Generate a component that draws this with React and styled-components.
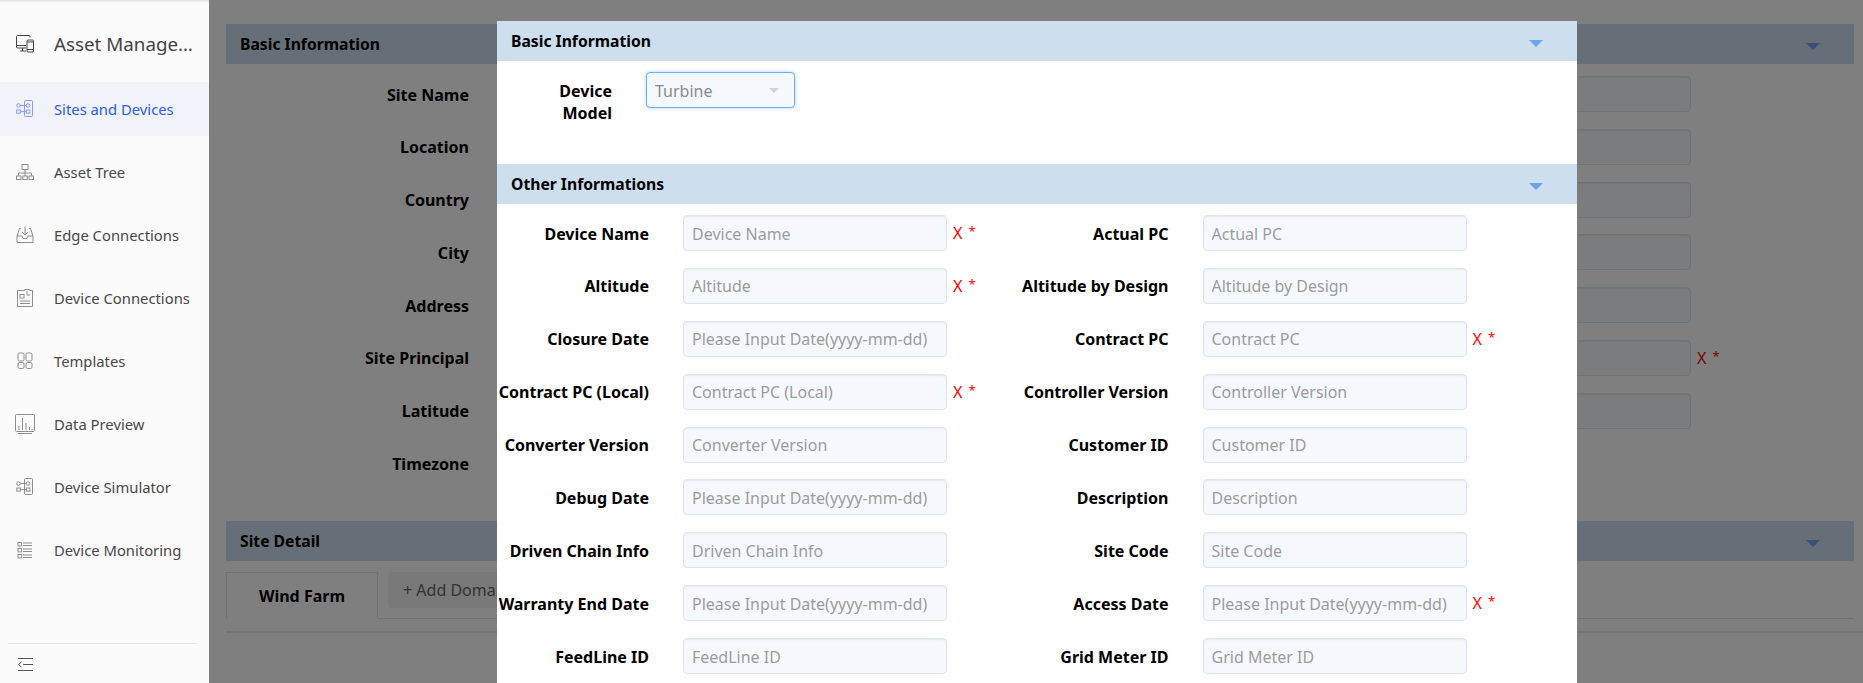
import React from "react";
import styled, { createGlobalStyle } from "styled-components";

const Global = createGlobalStyle`
  html, body { margin: 0; padding: 0; height: 100%; overflow: hidden; background: #fff; }
  body { font-family: "Noto Sans", "Open Sans", sans-serif; font-size: 14px; color: #000; }
  #root { height: 100%; }
  * { box-sizing: border-box; }
`;

const Page = styled.div`
  display: flex;
  height: 683px;
  width: 1863px;
  overflow: hidden;
  position: relative;
`;

const Sidebar = styled.aside`
  flex: 0 0 209px;
  width: 209px;
  min-width: 0;
  display: flex;
  flex-direction: column;
  background: #fbfbfb;
  box-shadow: inset 0 3px 3px -2px rgba(0, 0, 0, 0.12);
`;

const Brand = styled.div`
  height: 82px;
  flex: none;
  display: flex;
  align-items: center;
  gap: 19px;
  padding: 6px 13px 0 15px;
  color: #444;
  font-size: 18.8px;
`;

const BrandText = styled.span`
  flex: 1;
  min-width: 0;
  width: 0;
  white-space: nowrap;
  overflow: hidden;
  text-overflow: ellipsis;
`;

const NavList = styled.nav`
  flex: 1;
  display: flex;
  flex-direction: column;
  gap: 9px;
`;

const NavItem = styled.a`
  height: 54px;
  display: flex;
  align-items: center;
  gap: 19px;
  padding-left: 15px;
  font-size: 14.8px;
  color: ${(p) => (p.$active ? "#2a5cf5" : "#484848")};
  background: ${(p) => (p.$active ? "#f2f3fa" : "transparent")};
`;

const SideFoot = styled.div`
  height: 40px;
  margin: 0 12px 0 8px;
  border-top: 1px solid #e6e6e6;
  display: flex;
  align-items: center;
  padding-left: 8px;
  flex: none;
`;

const Main = styled.main`
  flex: 1;
  min-width: 0;
  position: relative;
  overflow: hidden;
  padding: 24px 9px 0 17px;
  background: #fff;
`;

const Overlay = styled.div`
  position: absolute;
  inset: 0;
  background: rgba(0, 0, 0, 0.5);
`;

const SectionBar = styled.div`
  height: 40px;
  display: flex;
  align-items: center;
  justify-content: space-between;
  padding: 0 34px 0 14px;
  background: #cddfef;
  font-size: 15.7px;
  font-weight: 700;
  color: #000;
`;

const Caret = styled.span`
  width: 0;
  height: 0;
  margin-top: 5px;
  border-left: 7px solid transparent;
  border-right: 7px solid transparent;
  border-top: 7px solid #6ea3e8;
`;

const BackForm = styled.div`
  display: flex;
  flex-direction: column;
  gap: 16.8px;
  padding-top: 12px;
  height: 457px;
`;

const BackRow = styled.div`
  display: flex;
  align-items: center;
  height: 36px;
`;

const BackLabel = styled.label`
  flex: 0 0 243px;
  padding-top: 1px;
  text-align: right;
  font-size: 16px;
  font-weight: 700;
  margin-right: 34px;
`;

const Field = styled.input`
  height: 36px;
  width: ${(p) => p.$w || 264}px;
  flex: none;
  padding: 1px 8px 0;
  font: inherit;
  font-size: 16px;
  border: 1px solid #dce6f2;
  border-radius: 4px;
  background: #f5f9fd;
  box-shadow: inset 0 1px 1px rgba(120, 140, 170, 0.12);
  outline: none;
  &::placeholder { color: #9c9c9c; opacity: 1; }
`;

const Required = styled.span`
  display: inline-flex;
  align-items: flex-start;
  gap: 6px;
  margin-left: 6px;
  color: #f00;
  font-size: 16px;
  white-space: nowrap;
`;

const Star = styled.span`
  font-size: 13px;
  line-height: 18px;
`;

const Tabs = styled.div`
  display: flex;
  align-items: flex-start;
  height: 47px;
  margin-top: 11px;
  position: relative;
  border-bottom: 1px solid #dfe3ea;
`;

const Tab = styled.div`
  width: 152px;
  height: 47px;
  display: flex;
  align-items: center;
  justify-content: center;
  border: 1px solid #dfe3ea;
  border-bottom: 1px solid #fff;
  background: #fff;
  font-size: 16px;
  font-weight: 700;
`;

const AddTab = styled.div`
  margin-left: 10px;
  width: 160px;
  height: 36px;
  padding-left: 15px;
  display: flex;
  align-items: center;
  background: #f2f2f2;
  border-radius: 4px;
  color: #666;
  font-size: 16px;
`;

const Rule = styled.div`
  height: 2px;
  margin: 12px -9px 0 0;
  background: #e6e6e6;
`;

const Modal = styled.section`
  position: absolute;
  left: 497px;
  top: 21px;
  bottom: 0;
  width: 1080px;
  background: #fff;
  overflow: hidden;
`;

const DeviceBlock = styled.div`
  height: 103px;
  padding: 11px 0 0 60px;
  display: flex;
  align-items: flex-start;
`;

const ModelLabel = styled.label`
  width: 55px;
  margin-top: 8px;
  margin-right: 34px;
  text-align: right;
  font-size: 16px;
  line-height: 22px;
  font-weight: 700;
`;

const SelectBox = styled.div`
  width: 149px;
  height: 36px;
  display: flex;
  align-items: center;
  justify-content: space-between;
  padding: 1px 15px 0 8px;
  background: #f5f9fd;
  border: 1px solid #6cb0f0;
  border-radius: 4px;
  box-shadow: 0 0 4px rgba(108, 176, 240, 0.5);
  color: #8a8a8a;
  font-size: 16px;
`;

const SelectCaret = styled.span`
  width: 0;
  height: 0;
  border-left: 5px solid transparent;
  border-right: 5px solid transparent;
  border-top: 5px solid #cfd3d6;
`;

const FormGrid = styled.div`
  display: grid;
  grid-template-columns: 519.5px 519.5px;
  row-gap: 16.9px;
  padding-top: 11px;
`;

const FormRow = styled.div`
  display: flex;
  align-items: center;
  height: 36px;
`;

const RowLabel = styled.label`
  flex: 0 0 152px;
  margin-right: 34px;
  padding-top: 1px;
  text-align: right;
  font-size: 16px;
  font-weight: 700;
  white-space: nowrap;
`;

const Icon = styled.svg`
  width: 20px;
  height: 20px;
  flex: none;
  fill: none;
  stroke: ${(p) => p.$c || "#8d8d8d"};
  stroke-width: 1;
`;

const I = ({ c, children }) => (
  <Icon viewBox="0 0 20 20" $c={c}>
    {children}
  </Icon>
);

const Flow = ({ c }) => (
  <I c={c}>
    <rect x="9.5" y="1.5" width="8" height="16" rx="1" />
    <circle cx="3.5" cy="6.5" r="1.8" />
    <circle cx="13" cy="6.5" r="1.8" />
    <path d="M5.3 6.5h5.9" />
    <rect x="1.7" y="11" width="3.6" height="3.2" />
    <rect x="11.4" y="11" width="3.4" height="3.2" />
    <path d="M5.3 12.6h6.1" />
  </I>
);

const icons = {
  flow: Flow,
  tree: ({ c }) => (
    <I c={c}>
      <rect x="7" y="2.5" width="6" height="5" />
      <path d="M10 7.5v3.5M3.5 14v-3h13v3M10 11v3" />
      <rect x="1.5" y="14" width="4.5" height="3.5" />
      <rect x="7.8" y="14" width="4.5" height="3.5" />
      <rect x="14" y="14" width="4.5" height="3.5" />
    </I>
  ),
  inbox: ({ c }) => (
    <I c={c}>
      <path d="M6 3.5H4.5L2 11v6.5h16V11l-2.5-7.5H14" />
      <path d="M2 11h5l1 2.5h4l1-2.5h5" />
      <path d="M10 1.5v8M7 7l3 3 3-3" />
    </I>
  ),
  doc: ({ c }) => (
    <I c={c}>
      <path d="M2.5 2.5h7v-1h5v1h3v16h-15z" />
      <rect x="5" y="6.5" width="4" height="3.5" />
      <path d="M5 13h10M5 15.5h10M12 3v4h3" />
    </I>
  ),
  grid: ({ c }) => (
    <I c={c}>
      <rect x="3" y="2" width="6" height="8" rx="1.5" />
      <rect x="11" y="2" width="6" height="8" rx="1.5" />
      <rect x="3" y="11.5" width="6" height="6" rx="1.5" />
      <rect x="11" y="11.5" width="6" height="6" rx="1.5" />
    </I>
  ),
  chart: ({ c }) => (
    <I c={c}>
      <rect x="0.5" y="0.5" width="19" height="17" rx="1" />
      <path d="M4 16v-4M7.5 16V4M11 16V9M14.5 16v-3M17 16v-1M3 19.5h14" />
    </I>
  ),
  list: ({ c }) => (
    <I c={c}>
      <rect x="3" y="2.5" width="3.4" height="3.4" />
      <rect x="3" y="8.5" width="3.4" height="3.4" />
      <rect x="3" y="14.5" width="3.4" height="3.4" />
      <path d="M8 3h9M8 5.5h9M8 9h9M8 11.5h9M8 15h9M8 17.5h9" />
    </I>
  ),
};

const nav = [
  ["Sites and Devices", "flow", true],
  ["Asset Tree", "tree"],
  ["Edge Connections", "inbox"],
  ["Device Connections", "doc"],
  ["Templates", "grid"],
  ["Data Preview", "chart"],
  ["Device Simulator", "flow"],
  ["Device Monitoring", "list"],
];

const back = [
  ["Site Name"],
  ["Location"],
  ["Country"],
  ["City"],
  ["Address"],
  ["Site Principal", true],
  ["Latitude"],
];

const D = "Please Input Date(yyyy-mm-dd)";
const rows = [
  ["Device Name", "Device Name", true],
  ["Actual PC", "Actual PC"],
  ["Altitude", "Altitude", true],
  ["Altitude by Design", "Altitude by Design"],
  ["Closure Date", D],
  ["Contract PC", "Contract PC", true],
  ["Contract PC (Local)", "Contract PC (Local)", true],
  ["Controller Version", "Controller Version"],
  ["Converter Version", "Converter Version"],
  ["Customer ID", "Customer ID"],
  ["Debug Date", D],
  ["Description", "Description"],
  ["Driven Chain Info", "Driven Chain Info"],
  ["Site Code", "Site Code"],
  ["Warranty End Date", D],
  ["Access Date", D, true],
  ["FeedLine ID", "FeedLine ID"],
  ["Grid Meter ID", "Grid Meter ID"],
];

const Mark = () => (
  <Required>
    X<Star>*</Star>
  </Required>
);

export default function App() {
  return (
    <Page>
      <Global />
      <Sidebar>
        <Brand>
          <I c="#444">
            <path d="M15 3.5V2.5a1 1 0 0 0-1-1H2.5a1 1 0 0 0-1 1V13a1 1 0 0 0 1 1H11M1.5 11.5H11M5 17h6M7.5 14v3" />
            <rect x="12" y="6" width="6.5" height="12" rx="1" />
            <path d="M12 15.5h6.5M12 8h6.5" />
          </I>
          <BrandText>Asset Management</BrandText>
        </Brand>
        <NavList>
          {nav.map(([label, icon, active]) => {
            const G = icons[icon];
            return (
              <NavItem key={label} $active={active}>
                <G c={active ? "#8a9cf5" : undefined} />
                {label}
              </NavItem>
            );
          })}
        </NavList>
        <SideFoot>
          <I c="#555">
            <path d="M2 4.5h15M2 16.5h15M7 10.5h10M5.5 8 2.5 10.5 5.5 13" />
          </I>
        </SideFoot>
      </Sidebar>
      <Main>
        <SectionBar>
          Basic Information
          <Caret />
        </SectionBar>
        <BackForm>
          {back.map(([label, req]) => (
            <BackRow key={label}>
              <BackLabel>{label}</BackLabel>
              <Field $w={1188} />
              {req && <Mark />}
            </BackRow>
          ))}
          <BackRow>
            <BackLabel>Timezone</BackLabel>
          </BackRow>
        </BackForm>
        <SectionBar>
          Site Detail
          <Caret />
        </SectionBar>
        <Tabs>
          <Tab>Wind Farm</Tab>
          <AddTab>+ Add Domain</AddTab>
        </Tabs>
        <Rule />
        <Overlay />
      </Main>
      <Modal>
        <SectionBar>
          Basic Information
          <Caret />
        </SectionBar>
        <DeviceBlock>
          <ModelLabel>Device Model</ModelLabel>
          <SelectBox>
            Turbine
            <SelectCaret />
          </SelectBox>
        </DeviceBlock>
        <SectionBar>
          Other Informations
          <Caret />
        </SectionBar>
        <FormGrid>
          {rows.map(([label, ph, req]) => (
            <FormRow key={label}>
              <RowLabel>{label}</RowLabel>
              <Field placeholder={ph} />
              {req && <Mark />}
            </FormRow>
          ))}
        </FormGrid>
      </Modal>
    </Page>
  );
}
